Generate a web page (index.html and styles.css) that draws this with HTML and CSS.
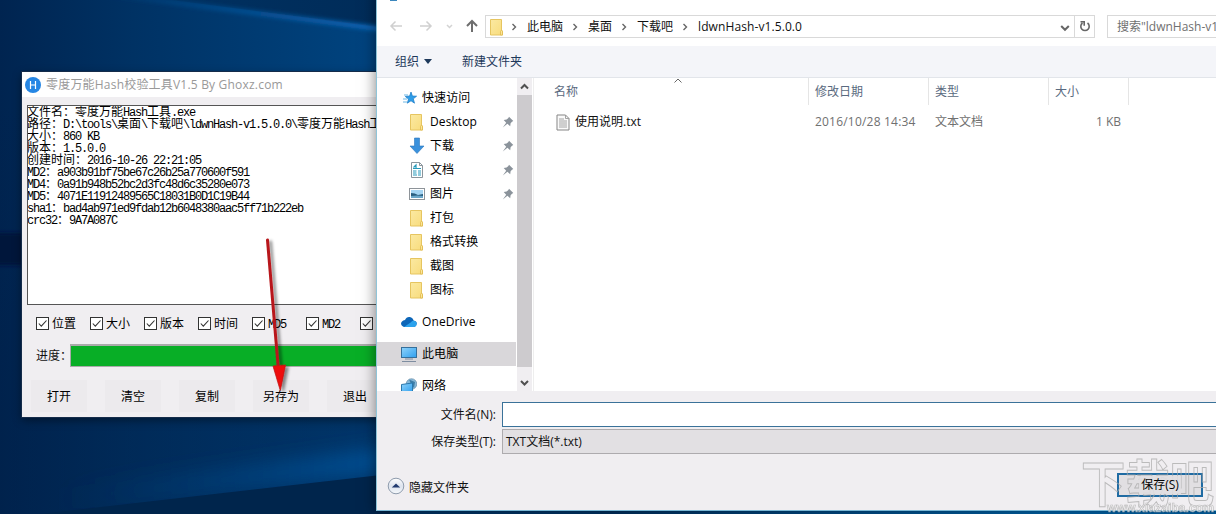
FILE: index.html
```html
<!DOCTYPE html>
<html lang="zh-CN">
<head>
<meta charset="utf-8">
<title>零度万能Hash校验工具</title>
<link rel="stylesheet" href="styles.css">
</head>
<body>
<svg width="0" height="0" class="defs">
  <defs>
    <linearGradient id="fold" x1="0" y1="0" x2="1" y2="1"><stop offset="0" stop-color="#fbe9a2"/><stop offset="1" stop-color="#f8dc7c"/></linearGradient>
    <linearGradient id="scr" x1="0" y1="0" x2="1" y2="1"><stop offset="0" stop-color="#8fd3fb"/><stop offset="1" stop-color="#2f9fee"/></linearGradient>
    <symbol id="folder" viewBox="0 0 16 18"><path d="M2.500 1.500h11v11l1 .5v4h-12z" fill="url(#fold)" stroke="#e6c560"/><path d="M12.500 17v-3.500q0-1 1-1t1 1V17z" fill="#fbe69a" stroke="#dfb94d" stroke-width=".8"/></symbol>
    <symbol id="pin" viewBox="0 0 12 12"><path d="M7 .8 11.300 5 10 5.800 8.600 7.300 8.200 10.300 5.400 7.700.8 11.400 4.200 6.700 1.700 4 4.600 3.600 6.400 2z" fill="#8b939b"/></symbol>
    <symbol id="check" viewBox="0 0 13 13"><rect x=".5" y=".5" width="12" height="12" fill="#fff" stroke="#333"/><path d="M2.800 6.500 5.300 9.200 10.500 3.500" fill="none" stroke="#333" stroke-width="1.100"/></symbol>
    <symbol id="chev" viewBox="0 0 6 8"><path d="M1.500 1 4.500 4 1.500 7" fill="none" stroke="#666" stroke-width="1.400"/></symbol>
  </defs>
</svg>
<div class="desktop">
  <svg class="wallpaper" width="1216" height="514" viewBox="0 0 1216 514">
    <defs>
      <linearGradient id="bg" gradientUnits="userSpaceOnUse" x1="0" y1="0" x2="380" y2="0"><stop offset="0" stop-color="#002450"/><stop offset=".35" stop-color="#003264"/><stop offset="1" stop-color="#004480"/></linearGradient>
      <linearGradient id="shade" x1="0" y1="0" x2="0" y2="1"><stop offset=".2" stop-color="#001f47" stop-opacity="0"/><stop offset=".8" stop-color="#001f47" stop-opacity=".4"/></linearGradient>
      <linearGradient id="top" gradientUnits="userSpaceOnUse" x1="100" y1="0" x2="380" y2="0"><stop offset="0" stop-color="#003263"/><stop offset="1" stop-color="#002c59"/></linearGradient>
      <linearGradient id="beam" gradientUnits="userSpaceOnUse" x1="80" y1="0" x2="380" y2="0"><stop offset="0" stop-color="#0a559c" stop-opacity="0"/><stop offset="1" stop-color="#0c68bb"/></linearGradient>
      <linearGradient id="low" gradientUnits="userSpaceOnUse" x1="60" y1="0" x2="380" y2="0"><stop offset="0" stop-color="#004078" stop-opacity="0"/><stop offset="1" stop-color="#005299"/></linearGradient>
      <linearGradient id="strip" gradientUnits="userSpaceOnUse" x1="600" y1="0" x2="1040" y2="0"><stop offset="0" stop-color="#00305f"/><stop offset="1" stop-color="#0066ad"/></linearGradient>
      <filter id="soft" x="-10%" y="-50%" width="120%" height="200%"><feGaussianBlur stdDeviation="2"/></filter>
      <filter id="wide" x="-20%" y="-200%" width="140%" height="500%"><feGaussianBlur stdDeviation="10"/></filter>
    </defs>
    <rect width="1216" height="514" fill="url(#bg)"/>
    <rect width="1216" height="514" fill="url(#shade)"/>
    <rect x="-20" y="233" width="60" height="32" fill="#00173a" filter="url(#soft)"/>
    <path d="M80-12H400V30z" fill="url(#top)"/>
    <path d="M90-8 390 30" stroke="url(#beam)" stroke-width="5" filter="url(#soft)"/>
    <path d="M60 500 420 456" stroke="url(#low)" stroke-width="22" filter="url(#wide)"/>
    <path d="M40 514 390 474V520H40z" fill="#00254c"/>
    <rect x="600" y="509" width="616" height="5" fill="url(#strip)"/>
  </svg>

  <section class="tool">
    <header class="tool-title">
      <svg width="16" height="16" viewBox="0 0 16 16"><circle cx="8" cy="8" r="8" fill="#2586e4"/><path d="M5.500 4v8M10.500 4v8M5.500 8h5" stroke="#fff" stroke-width="1.200"/></svg>
      <span>零度万能Hash校验工具V1.5 By Ghoxz.com</span>
    </header>
    <div class="memo">
      <p><b>文件名：零度万能</b>Hash<b>工具</b>.exe</p>
      <p><b>路径：</b>D:\tools\<b>桌面</b>\<b>下载吧</b>\ldwnHash-v1.5.0.0\<b>零度万能</b>Hash<b>工具</b>.exe</p>
      <p><b>大小：</b>860 KB</p>
      <p><b>版本：</b>1.5.0.0</p>
      <p><b>创建时间：</b>2016-10-26 22:21:05</p>
      <p>MD2<b>：</b>a903b91bf75be67c26b25a770600f591</p>
      <p>MD4<b>：</b>0a91b948b52bc2d3fc48d6c35280e073</p>
      <p>MD5<b>：</b>4071E11912489565C18031B0D1C19B44</p>
      <p>sha1<b>：</b>bad4ab971ed9fdab12b6048380aac5ff71b222eb</p>
      <p>crc32<b>：</b>9A7A087C</p>
    </div>
    <div class="checks">
      <label><svg><use href="#check"/></svg><b>位置</b></label>
      <label><svg><use href="#check"/></svg><b>大小</b></label>
      <label><svg><use href="#check"/></svg><b>版本</b></label>
      <label><svg><use href="#check"/></svg><b>时间</b></label>
      <label><svg><use href="#check"/></svg><span>MD5</span></label>
      <label><svg><use href="#check"/></svg><span>MD2</span></label>
      <label><svg><use href="#check"/></svg></label>
    </div>
    <div class="progress"><span>进度：</span><div class="bar"></div></div>
    <div class="buttons">
      <span>打开</span><span>清空</span><span>复制</span><span>另存为</span><span>退出</span>
    </div>
  </section>

  <svg class="arrow" width="50" height="165" viewBox="0 0 50 165">
    <defs><filter id="sh" x="-50%" width="200%"><feDropShadow dx="3" dy="2" stdDeviation="1.500" flood-color="#000" flood-opacity=".45"/></filter></defs>
    <g filter="url(#sh)"><path d="M15.500 5 26.200 132" stroke="#b8161a" stroke-width="3" stroke-linecap="round"/><path d="M21 131 33.500 130 28.300 155.500z" fill="#ee0c0c" stroke="#c31616" stroke-width=".8"/></g>
  </svg>

  <section class="dialog">
    <div class="nav">
      <i class="remnant"></i>
      <svg class="navicons" width="92" height="16" viewBox="0 0 92 16" fill="none">
        <path d="M13 8H2M6.500 3.500 2 8l4.500 4.500M31 8h11M37.500 3.500 42 8l-4.500 4.500" stroke="#d0d0d0" stroke-width="1.500"/>
        <path d="M58 7l2.500 2.500L63 7" stroke="#d3d3d3" stroke-width="1.500"/>
        <path d="M83 14V3M78 8l5-5 5 5" stroke="#6e6e6e" stroke-width="2"/>
      </svg>
      <div class="address">
        <svg class="f" width="16" height="18"><use href="#folder"/></svg>
        <svg class="c"><use href="#chev"/></svg><span class="a1">此电脑</span>
        <svg class="c"><use href="#chev"/></svg><span class="a2">桌面</span>
        <svg class="c"><use href="#chev"/></svg><span class="a3">下载吧</span>
        <svg class="c"><use href="#chev"/></svg><span class="a4">ldwnHash-v1.5.0.0</span>
        <svg class="drop" width="10" height="8" viewBox="0 0 10 8"><path d="M1.200 2 5 5.800 8.800 2" fill="none" stroke="#666" stroke-width="2"/></svg>
        <div class="refresh"><svg width="12" height="13" viewBox="0 0 12 13"><path d="M8.500 3A4.200 4.200 0 1 1 3.500 3M1.500 1.700h3.700v4" fill="none" stroke="#666" stroke-width="1.600"/></svg></div>
      </div>
      <div class="search">搜索"ldwnHash-v1.5.0.0"</div>
    </div>
    <div class="toolbar"><span>组织</span><i class="tri"></i><span>新建文件夹</span></div>
    <div class="body">
      <div class="tree">
        <div class="row"><svg width="16" height="16" viewBox="0 0 16 16"><path d="M9 2 10.400 6l4.200.2-3.300 2.600 1.200 4.400L9 10.800 5.300 13.200 6.500 9 3.300 6.500 7.600 6z" fill="#2f9de8" stroke="#1878c4" stroke-width=".7"/><path d="M2 5h4M1 9h4M1 12h4" stroke="#6db7e5"/></svg>快速访问</div>
        <div class="row sub"><svg class="tf" width="16" height="18"><use href="#folder"/></svg><span>Desktop</span><svg class="pin"><use href="#pin"/></svg></div>
        <div class="row sub"><svg width="16" height="18" viewBox="0 0 16 18"><path d="M5.500 1h5v8H15l-7 7.500L1 9h4.500z" fill="#3a91dc" stroke="#2876bd" stroke-width=".6"/></svg><span>下载</span><svg class="pin"><use href="#pin"/></svg></div>
        <div class="row sub"><svg width="16" height="18" viewBox="0 0 16 18"><path d="M2.500 1.500h8l3 3v12h-11z" fill="#fff" stroke="#8b959c"/><path d="M10.500 1.500v3h3" fill="none" stroke="#8b959c"/><path d="M4.500 6.500 7 4v3M4 7.500h8M4 10h3.500M9 10h3M4 12h3.500M9 12h3M4 14h4M9 14h3" stroke="#279abb" fill="none" stroke-width="1.200"/></svg><span>文档</span><svg class="pin"><use href="#pin"/></svg></div>
        <div class="row sub"><svg width="16" height="18" viewBox="0 0 16 18"><rect x=".5" y="3.500" width="15" height="11" fill="#fff" stroke="#8e9499"/><path d="M2 5h12v8H2z" fill="#a4d4f2"/><path d="M2 8q4 0 7 2l5-1v4H2z" fill="#295d7e"/><path d="M2 11q6-1 12 0v2H2z" fill="#6ba7c9"/></svg><span>图片</span><svg class="pin"><use href="#pin"/></svg></div>
        <div class="row sub"><svg class="tf" width="16" height="18"><use href="#folder"/></svg>打包</div>
        <div class="row sub"><svg class="tf" width="16" height="18"><use href="#folder"/></svg>格式转换</div>
        <div class="row sub"><svg class="tf" width="16" height="18"><use href="#folder"/></svg>截图</div>
        <div class="row sub"><svg class="tf" width="16" height="18"><use href="#folder"/></svg>图标</div>
        <div class="row root"><svg width="16" height="16" viewBox="0 0 16 16"><path d="M2 12.500A3 3 0 0 1 1 7.500Q2 6 4 6 5.500 2.500 8.800 3 12 3.500 12.500 6.500q3.300.5 3.300 3T13 13H3z" fill="#0d66b8"/><path d="M3 13 10 8.200q1-1.600 3-1.400 2.800.6 2.800 3T13 13z" fill="#2ba2ec"/></svg>OneDrive</div>
        <div class="row root selected"><svg width="16" height="16" viewBox="0 0 16 16"><rect x=".5" y="1.500" width="15" height="10" fill="url(#scr)" stroke="#356f9b"/><path d="M4 13h8M1 15.500h14" stroke="#7e8da0"/></svg>此电脑</div>
        <div class="row root"><svg width="16" height="16" viewBox="0 0 16 16"><circle cx="10.500" cy="6" r="5.300" fill="#86b8d8" stroke="#5a82a0" stroke-width=".6"/><path d="M8 1.500 14 4l-1 6-3-4z" fill="#3e7ea8"/><path d="M.5 6.500 11.500 5v9.500H.5z" fill="url(#scr)" stroke="#2a78ad"/></svg>网络</div>
      </div>
      <div class="scroll">
        <svg width="15" height="17" viewBox="0 0 15 17"><path d="M4 10.500 7.500 7 11 10.500" fill="none" stroke="#505050" stroke-width="2"/></svg>
        <i></i>
        <svg width="15" height="17" viewBox="0 0 15 17"><path d="M4 7 7.500 10.500 11 7" fill="none" stroke="#505050" stroke-width="2"/></svg>
      </div>
      <div class="list">
        <div class="head">
          <span>名称<svg class="sort" width="8" height="5" viewBox="0 0 8 5"><path d="M.5 4.500 4 1l3.500 3.500" fill="none" stroke="#666"/></svg></span><span>修改日期</span><span>类型</span><span>大小</span>
        </div>
        <div class="file">
          <span><svg width="14" height="17" viewBox="0 0 14 17"><path d="M1 1h8.500L13 4.500V16H1z" fill="#fafafa" stroke="#858585"/><path d="M9.500 1v3.500H13M3 5h5M3 7h8M3 9h8M3 11h8M3 13h8" fill="none" stroke="#9a9a9a" stroke-width=".9"/></svg>使用说明.txt</span><span class="date">2016/10/28 14:34</span><span>文本文档</span><span>1 KB</span>
        </div>
      </div>
    </div>
    <div class="form">
      <div class="field"><label>文件名(N):</label><div class="input"></div></div>
      <div class="field"><label>保存类型(T):</label><div class="select">TXT文档(*.txt)</div></div>
      <div class="foot">
        <svg width="18" height="18" viewBox="0 0 18 18"><defs><linearGradient id="rb" x1="0" y1="0" x2="0" y2="1"><stop offset="0" stop-color="#fff"/><stop offset=".5" stop-color="#dde3ee"/><stop offset="1" stop-color="#f5f8fb"/></linearGradient></defs><circle cx="9" cy="9" r="7.800" fill="url(#rb)" stroke="#8f9cad"/><path d="M4.800 10.500 9 6.500l4.200 4z" fill="#213a70"/></svg>
        <span>隐藏文件夹</span>
        <div class="save">保存(S)</div>
      </div>
    </div>
  </section>

  <svg class="watermark" width="140" height="58" viewBox="0 0 140 58">
    <defs><mask id="wm"><rect width="140" height="58" fill="#fff"/><rect x="58" y="20" width="42" height="18" fill="#222"/></mask></defs>
    <g mask="url(#wm)">
      <text class="wm-big" x="0" y="46" textLength="133" lengthAdjust="spacingAndGlyphs">下载吧</text>
    </g>
    <text class="wm-url" x="26" y="56" textLength="107" lengthAdjust="spacingAndGlyphs">www.xiazaiba.com</text>
  </svg>
</div>
</body>
</html>
```
FILE: styles.css
```css
* { box-sizing: border-box; }
body { margin: 0; overflow: hidden; font: 12px/24px "Open Sans", "Noto Sans CJK SC", sans-serif; color: #111; }
p { margin: 0; }
b { font-weight: 400; letter-spacing: 0; }
svg { flex: none; display: block; }
.defs { position: absolute; }
.desktop { position: relative; width: 1216px; height: 514px; overflow: hidden; background: #00305f; }
.wallpaper { position: absolute; left: 0; top: 0; }

/* hash tool window */
.tool { position: absolute; left: 22px; top: 72px; width: 420px; height: 345px; background: #f0eef1; box-shadow: 0 0 0 1px #152c4a, 0 3px 9px rgba(0,0,0,.45); }
.tool-title { height: 25px; background: #fff; display: flex; align-items: center; gap: 5px; padding-left: 3px; color: #999; letter-spacing: .2px; }
.memo { margin: 8px 0 0 5px; height: 200px; border: 1px solid #555; background: #fff; padding-top: 1px; white-space: nowrap; overflow: hidden; }
.memo p { height: 12px; line-height: 12px; margin-left: -1px; }
.memo, .checks { font-family: "Liberation Mono", "Noto Sans CJK SC", monospace; letter-spacing: -1.2px; color: #000; }
.checks { display: flex; padding: 11px 0 0 14px; height: 38px; }
.checks label { width: 54px; display: flex; align-items: center; height: 14px; gap: 3px; }
.checks svg { width: 13px; height: 13px; }
.checks b, .checks span { padding-top: 3px; }
.progress { display: flex; align-items: center; height: 24px; padding-left: 14px; }
.progress span { width: 34px; white-space: nowrap; padding-top: 2px; }
.bar { flex: 1; height: 23px; background: #08ae26; border: 1px solid #aaa; border-top-width: 2px; }
.buttons { display: flex; gap: 18px; padding: 13px 0 0 9px; }
.buttons span { width: 56px; height: 32px; line-height: 34px; text-align: center; background: #eceaed; color: #000; }

.arrow { position: absolute; left: 252px; top: 235px; }

/* save dialog */
.dialog { position: absolute; left: 376px; top: -20px; width: 900px; height: 531px; padding-top: 20px; background: #f0eef1; border-left: 1px solid #8fc4d8; border-bottom: 1px solid #79b7d5; box-shadow: 0 0 14px rgba(0,0,0,.5); }
.nav { height: 46px; background: #fff; display: flex; padding-top: 15px; position: relative; }
.remnant { position: absolute; left: 13px; top: 0; width: 7px; height: 1px; background: #3c87bd; }
.navicons { margin: 3px 4px 0 12px; }
.address { flex: none; width: 610px; height: 23px; border: 1px solid #d9d9d9; display: flex; align-items: center; line-height: 21px; color: #111; }
.address .f { margin-left: 2px; }
.address .c { width: 6px; height: 8px; margin: 1px 10px 0 9px; }
.address .f + .c { margin-left: 7px; }
.a1 { width: 36px; } .a2 { width: 24px; } .a3 { width: 36px; } .a4 { letter-spacing: .1px; }
.drop { margin: 2px 4px 0 auto; }
.refresh { width: 20px; height: 21px; border-left: 1px solid #d9d9d9; display: flex; align-items: center; justify-content: center; }
.search { flex: none; margin-left: 12px; width: 200px; height: 23px; border: 1px solid #d9d9d9; padding-left: 9px; line-height: 21px; color: #707070; white-space: nowrap; }
.toolbar { height: 32px; background: #f4f5f9; border-bottom: 1px solid #e2e5ea; display: flex; align-items: center; padding-left: 18px; color: #1e395b; }
.tri { border: 4px solid transparent; border-top: 5px solid #1e395b; border-bottom: 0; margin: 0 30px 0 5px; }
.body { height: 313px; display: flex; background: #fff; overflow: hidden; }
.tree { width: 139px; padding-top: 8px; color: #000; }
.row { height: 24px; display: flex; align-items: center; gap: 4px; padding-left: 25px; letter-spacing: .1px; white-space: nowrap; }
.row.sub { padding-left: 32px; gap: 5px; }
.row .tf { margin-left: -1px; margin-right: 1px; }
.row .pin { width: 12px; height: 12px; margin: 0 2px 0 auto; }
.row.root { margin-top: 8px; padding-left: 24px; gap: 5px; }
.row.selected { background: #d9d7da; }
.scroll { width: 15px; margin-left: 1px; background: #f0eef1; display: flex; flex-direction: column; }
.scroll i { flex: 1; background: #cdcbce; margin-bottom: 7px; }
.list { flex: 1; margin-left: 1px; border-left: 1px solid #eee; }
.head, .file { display: flex; }
.head { height: 27px; line-height: 28px; color: #5a6a80; }
.head span { border-right: 1px solid #e5e5e5; padding-left: 6px; position: relative; }
.head span:nth-child(1), .file span:nth-child(1) { width: 275px; padding-left: 20px; }
.head span:nth-child(2), .head span:nth-child(3), .file span:nth-child(2), .file span:nth-child(3) { width: 120px; }
.head span:nth-child(4), .file span:nth-child(4) { width: 80px; }
.sort { position: absolute; left: 140px; top: 0; }
.file { padding-top: 5px; color: #707070; }
.file span { padding-left: 6px; white-space: nowrap; }
.file span:nth-child(1) { display: flex; align-items: center; gap: 5px; color: #111; padding-left: 22px; }
.file span:nth-child(4) { text-align: right; padding-right: 8px; }
.file .date { letter-spacing: .2px; }
.form { height: 120px; padding-top: 11px; }
.field { display: flex; margin-bottom: 2px; }
.field label { width: 119px; text-align: right; margin-right: 6px; line-height: 25px; }
.input, .select { flex: 1; height: 25px; border: 1px solid #3a7299; background: #fff; }
.select { border-color: #adabae; background: #e2e0e3; padding-left: 3px; line-height: 23px; }
.foot { display: flex; align-items: flex-start; padding: 18px 0 0 11px; }
.foot svg { margin-top: 3px; margin-left: -1px; }
.foot span { margin-left: 4px; margin-top: 2px; }
.save { margin-left: 648px; margin-top: -1px; width: 86px; height: 24px; border: 2px solid #1f6ba3; background: #e1dfe2; text-align: center; line-height: 20px; color: #000; }

.watermark { position: absolute; left: 1081px; top: 456px; opacity: .75; }
.wm-big { font: 700 50px "Noto Sans CJK SC", sans-serif; fill: none; stroke: #aaa; stroke-width: 1; }
.wm-url { font: 700 12px "Liberation Sans", sans-serif; fill: #f3f3f3; stroke: #aaa; stroke-width: .6; }
```
